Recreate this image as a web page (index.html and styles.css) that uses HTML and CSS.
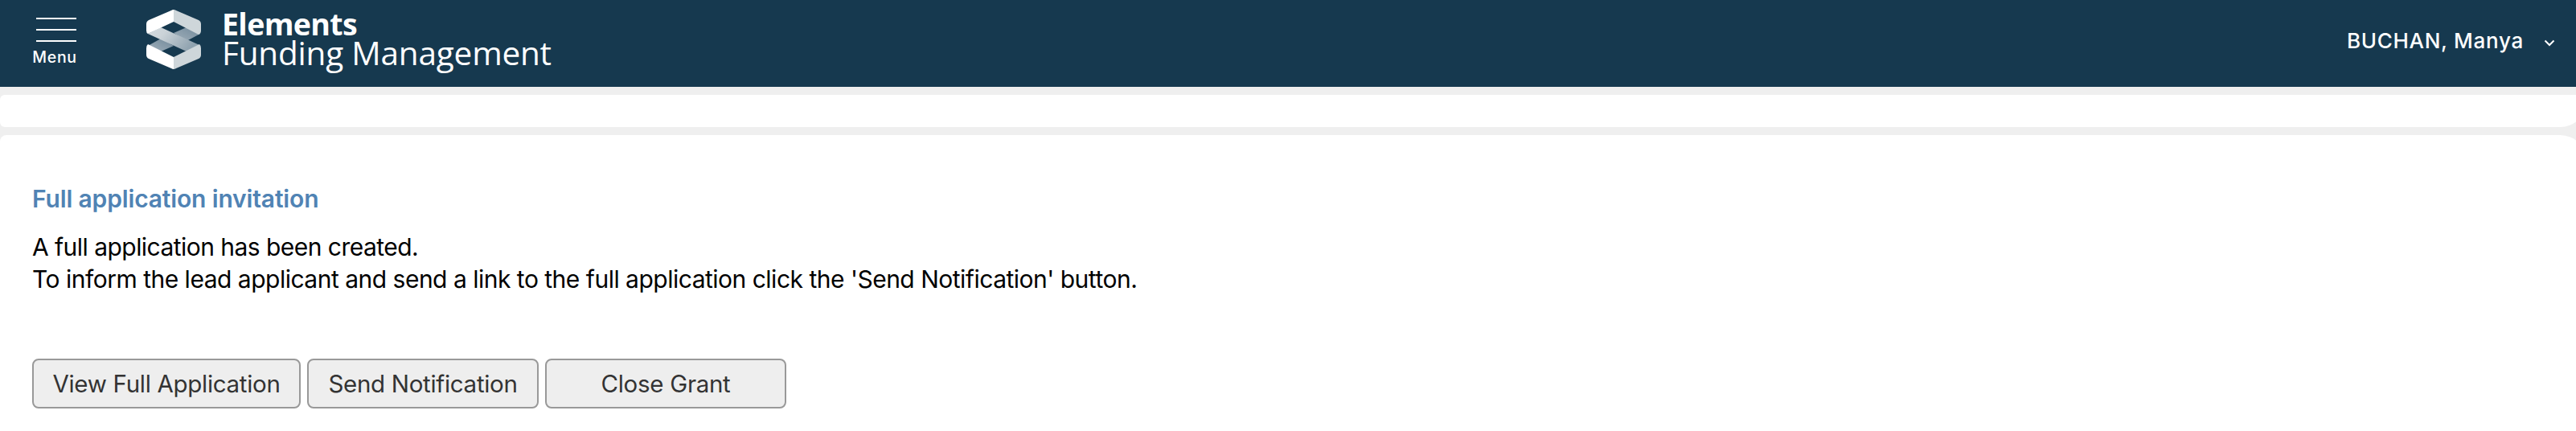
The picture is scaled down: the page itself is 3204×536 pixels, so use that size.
FILE: index.html
```html
<!DOCTYPE html>
<html lang="en">
<head>
<meta charset="utf-8">
<title>Elements Funding Management</title>
<link rel="stylesheet" href="styles.css">
</head>
<body>
<header class="topbar">
  <button class="menu" type="button">
    <span class="menu-bars"><i></i><i></i><i></i></span>
    <span class="menu-label">Menu</span>
  </button>
  <div class="brand">
    <svg class="logo" width="68" height="74" viewBox="0 0 68 74">
      <defs>
        <linearGradient id="band" x1="0" x2="1" y1="0" y2="0.4"><stop offset="0" stop-color="#d2d9de"/><stop offset=".35" stop-color="#cbd3d8"/><stop offset="1" stop-color="#8fa2af"/></linearGradient>
        <linearGradient id="back" x1="1" x2="0" y1="0" y2="1"><stop offset="0" stop-color="#71899a"/><stop offset="1" stop-color="#a0afba"/></linearGradient>
      </defs>
      <path fill="url(#back)" d="M50 22L67 30L50 39L34 29Z"/>
      <path fill="url(#back)" d="M18 36L34 45L18 52L2 45Z"/>
      <path fill="url(#band)" d="M2 30L18 22L66 44L50 52Z"/>
      <path fill="#fff" d="M34 0V15L2 30Q0 29 0 26V18Q0 14.500 3 13L31 1Q32.500 0 34 0Z"/>
      <path fill="#ced6da" d="M34 0Q35.500 0 37 1L65 13Q68 14.500 68 18V26Q68 30 65 31L34 15Z"/>
      <path fill="#fff" d="M2 43L34 59V74Q32.500 74 31 73L3 61Q0 59.500 0 56V48Q0 44.500 2 43Z"/>
      <path fill="#ced6da" d="M66 43L34 59V74Q35.500 74 37 73L65 61Q68 59.500 68 56V48Q68 44.500 66 43Z"/>
    </svg>
    <div class="brand-text">
      <span class="brand-name">Elements</span>
      <span class="brand-product">Funding Management</span>
    </div>
  </div>
  <div class="user">
    <span class="user-name">BUCHAN, Manya</span>
    <svg class="chevron" width="14" height="9" viewBox="0 0 14 9"><path d="M1.500 1.500L7 7L12.500 1.500" fill="none" stroke="#fff" stroke-width="2"/></svg>
  </div>
</header>
<main class="page">
  <section class="card card-empty"></section>
  <section class="card card-main">
    <h1 class="title">Full application invitation</h1>
    <p class="line line-first">A full application has been created.</p>
    <p class="line line-second">To inform the lead applicant and send a link to the full application click the 'Send Notification' button.</p>
    <div class="actions">
      <button class="btn btn-view" type="button">View Full Application</button>
      <button class="btn btn-send" type="button">Send Notification</button>
      <button class="btn btn-close" type="button">Close Grant</button>
    </div>
  </section>
</main>
</body>
</html>
```
FILE: styles.css
```css
* { box-sizing: border-box; }
body { margin: 0; background: #efefef; font-family: Inter, "Liberation Sans", sans-serif; overflow: hidden; }
.topbar { display: flex; height: 108px; background: #16394f; color: #fff; }
.menu { display: flex; flex-direction: column; align-items: center; justify-content: flex-start; width: 54px; margin: 22px 0 0 41px; padding: 0; border: 0; background: none; color: #fff; font-family: inherit; }
.menu-bars { display: flex; flex-direction: column; gap: 12px; width: 50px; margin-left: 2px; }
.menu-bars i { height: 2px; background: #fff; }
.menu-bars { margin-left: 4px; width: 50px; flex: none; }
.menu-label { margin-top: 7px; font-size: 19.500px; line-height: 24px; font-weight: 500; letter-spacing: .7px; white-space: nowrap; }
.brand { display: flex; align-items: flex-start; margin-left: 87px; padding-top: 11px; }
.logo { margin-top: 1px; }
.brand-text { display: flex; flex-direction: column; margin-left: 26px; font-family: "Open Sans", sans-serif; white-space: nowrap; }
.brand-name { font-size: 37.500px; font-weight: 700; line-height: 37px; letter-spacing: -.65px; }
.brand-product { font-size: 40.500px; line-height: 36px; letter-spacing: -.2px; }
.user { display: flex; align-items: flex-start; margin: 35px 26px 0 auto; }
.user-name { font-size: 26px; line-height: 32px; font-weight: 500; letter-spacing: .72px; white-space: nowrap; }
.chevron { margin: 14px 0 0 25px; }
.page { padding-top: 10px; overflow: hidden; }
.card { background: #fff; margin-right: -14px; border-radius: 8px 34px 34px 6px; }
.card-empty { height: 40px; margin-bottom: 10px; border-radius: 6px 0 34px 6px; }
.card-main { height: 368px; padding: 59px 40px 0; border-bottom-left-radius: 0; border-bottom-right-radius: 0; }
.title { margin: 0; font-size: 30px; line-height: 40px; font-weight: 600; letter-spacing: -.15px; color: #5083b4; }
.line { margin: 0; font-size: 30px; line-height: 40px; letter-spacing: -.5px; color: #000; white-space: nowrap; }
.line-first { margin-top: 20px; letter-spacing: -.54px; }
.actions { display: flex; gap: 8px; margin-top: 79px; }
.btn { height: 62px; padding: 0; border: 2px solid #999; border-radius: 8px; background: #eee; color: #333; font-family: inherit; font-size: 29.500px; line-height: 36px; letter-spacing: -.3px; white-space: nowrap; }
.btn-view { width: 334px; }
.btn-send { width: 288px; }
.btn-close { width: 300px; }
```
